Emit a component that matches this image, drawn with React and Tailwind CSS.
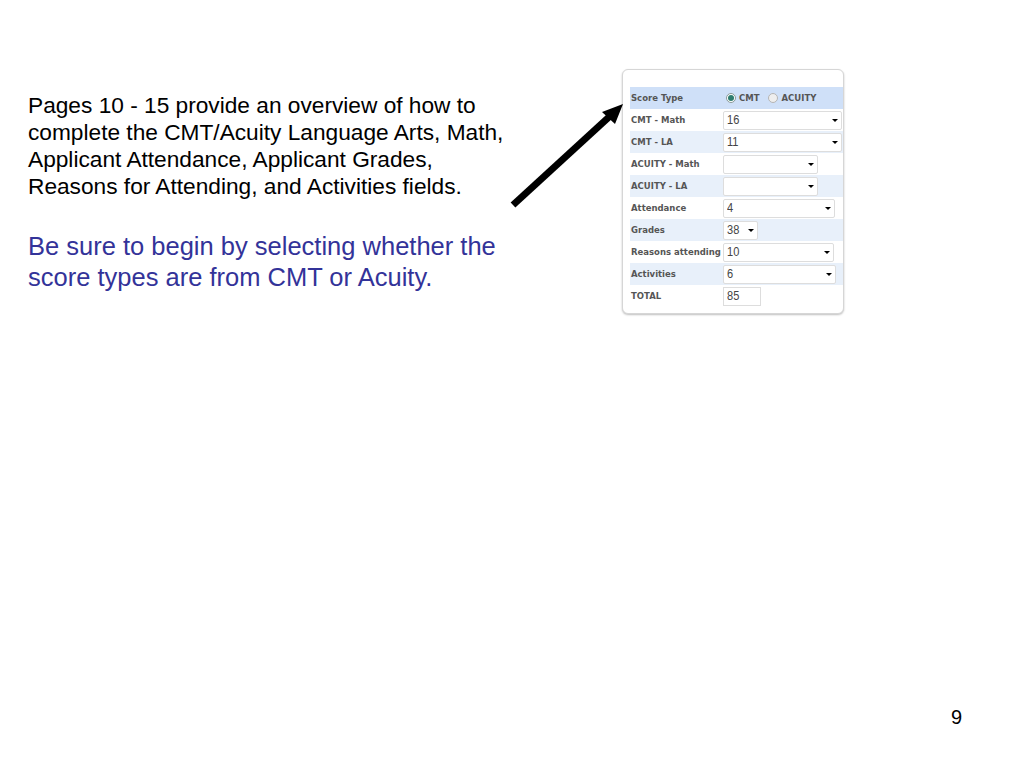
import React from 'react';

const rows = [
  { label: 'CMT - Math', value: '16', width: 'w-[119px]' },
  { label: 'CMT - LA', value: '11', width: 'w-[119px]', shaded: true },
  { label: 'ACUITY - Math', value: '', width: 'w-[95px]' },
  { label: 'ACUITY - LA', value: '', width: 'w-[95px]', shaded: true },
  { label: 'Attendance', value: '4', width: 'w-[112px]' },
  { label: 'Grades', value: '38', width: 'w-[35px]', shaded: true },
  { label: 'Reasons attending', value: '10', width: 'w-[111px]' },
  { label: 'Activities', value: '6', width: 'w-[113px]', shaded: true },
];

const Label = ({ children }) => (
  <span className="w-[93px] pl-[1px] shrink-0 whitespace-nowrap font-['DejaVu_Sans'] text-[8.5px] font-bold text-[#555555]">
    {children}
  </span>
);

const FakeSelect = ({ value, width }) => (
  <div className={`${width} h-[19px] flex items-center justify-between pl-[3px] pr-[3px] bg-white border border-[#dddddd] rounded-[2px] font-['Liberation_Sans'] text-[13px] text-[#444444]`}>
    <span className="scale-x-85 origin-left">{value}</span>
    <span className="w-0 h-0 border-x-[3px] border-x-transparent border-t-[3px] border-t-black" />
  </div>
);

const Row = ({ shaded, className = '', children }) => (
  <div className={`h-[22px] flex items-center ${shaded ? 'bg-[#e8f0fa]' : ''} ${className}`}>
    {children}
  </div>
);

const Radio = ({ checked }) => (
  <span className={`w-[10px] h-[10px] rounded-full border flex items-center justify-center ${checked ? 'border-[#8a9a9a] bg-white' : 'border-[#b5b5b5] bg-[#eeeeee]'}`}>
    {checked && <span className="w-[6px] h-[6px] rounded-full bg-[#2f7d6f]" />}
  </span>
);

const ScoreCard = () => (
  <div className="w-[222px] h-[245px] pt-[17px] pl-[7px] shrink-0 bg-white border border-[#d6d6d6] rounded-[6px] shadow-[0_1px_2px_rgba(0,0,0,0.25)]">
    <Row className="bg-[#cfe0f8]">
      <Label>Score Type</Label>
      <div className="flex items-center font-['DejaVu_Sans'] text-[8.5px] font-bold text-[#555555] pl-[3px]">
        <Radio checked />
        <span className="ml-[3px] mr-[8px]">CMT</span>
        <Radio />
        <span className="ml-[4px]">ACUITY</span>
      </div>
    </Row>
    {rows.map((row) => (
      <Row key={row.label} shaded={row.shaded}>
        <Label>{row.label}</Label>
        <FakeSelect value={row.value} width={row.width} />
      </Row>
    ))}
    <Row>
      <Label>TOTAL</Label>
      <div className="w-[38px] h-[19px] flex items-center pl-[3px] bg-white border border-[#dddddd] font-['Liberation_Sans'] text-[13px] text-[#444444]">
        <span className="scale-x-85 origin-left">85</span>
      </div>
    </Row>
  </div>
);

export default function App() {
  return (
    <div className="relative w-[1024px] h-[768px] overflow-hidden bg-white font-['Liberation_Sans',sans-serif]">
      <div className="flex items-start pt-[69px] pl-[28px]">
        <div className="w-[594px] pt-[23px] shrink-0">
          <p className="text-[22.7px] leading-[27px] text-black whitespace-nowrap">
            Pages 10 - 15 provide an overview of how to<br />
            complete the CMT/Acuity Language Arts, Math,<br />
            Applicant Attendance, Applicant Grades,<br />
            Reasons for Attending, and Activities fields.
          </p>
          <p className="mt-[31px] text-[25.5px] leading-[31px] text-[#333399] whitespace-nowrap">
            Be sure to begin by selecting whether the<br />
            score types are from CMT or Acuity.
          </p>
        </div>
        <ScoreCard />
      </div>

      {/* arrow sits over the gap between text and card */}
      <svg className="absolute left-[505px] top-[100px]" width="120" height="112" viewBox="0 0 120 112">
        <line x1="8" y1="105" x2="104" y2="17" stroke="black" strokeWidth="7" />
        <polygon points="118,4 97,12 110,24" fill="black" />
      </svg>

      <span className="absolute left-[951px] top-[705px] text-[20px] leading-[24px] text-black">9</span>
    </div>
  );
}
